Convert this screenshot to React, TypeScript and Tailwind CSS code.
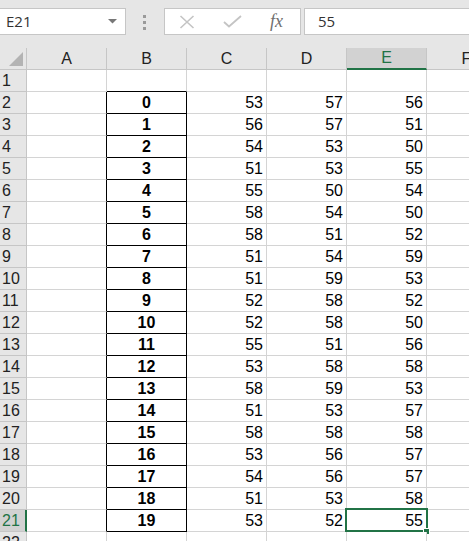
import React from "react";

const C = [53, 56, 54, 51, 55, 58, 58, 51, 51, 52, 52, 55, 53, 58, 51, 58, 53, 54, 51, 53];
const D = [57, 57, 53, 53, 50, 54, 51, 54, 59, 58, 58, 51, 58, 59, 53, 58, 56, 56, 53, 52];
const E = [56, 51, 50, 55, 54, 50, 52, 59, 53, 52, 50, 56, 58, 53, 57, 58, 57, 57, 58, 55];

const font = { fontFamily: '"Liberation Sans", Arial, sans-serif' };

function Toolbar() {
  return (
    <div className="h-[48px] bg-[#e6e6e6] flex items-start shrink-0">
      <div className="mt-[8px] w-[126px] h-[27px] bg-white border border-l-0 border-[#c6c6c6] flex items-center justify-between pl-[6px] pr-[8px] shrink-0">
        <span className="text-[15px] text-[#333]" style={{ fontFamily: '"Open Sans", "Noto Sans", sans-serif' }}>E21</span>
        <svg width="9" height="5" viewBox="0 0 9 5">
          <polygon points="0,0 9,0 4.5,4.5" fill="#777" />
        </svg>
      </div>
      <div className="ml-[17px] mt-[15px] flex flex-col gap-[3px] shrink-0">
        <div className="w-[3px] h-[3px] bg-[#9a9a9a]" />
        <div className="w-[3px] h-[3px] bg-[#9a9a9a]" />
        <div className="w-[3px] h-[3px] bg-[#9a9a9a]" />
      </div>
      <div className="ml-[18px] mt-[8px] w-[137px] h-[27px] bg-white border border-[#c6c6c6] flex items-center shrink-0">
        <svg width="16" height="14" viewBox="0 0 16 14" className="ml-[14px]">
          <path d="M1.5 1 L14.5 13 M14.5 1 L1.5 13" stroke="#c4c4c4" strokeWidth="1.6" fill="none" />
        </svg>
        <svg width="19" height="13" viewBox="0 0 19 13" className="ml-[28px]">
          <path d="M1 7 L6 11.5 L18 1" stroke="#c4c4c4" strokeWidth="1.8" fill="none" />
        </svg>
        <span
          className="ml-[28px] text-[18px] italic text-[#6f6f6f] leading-none -mt-[2px]"
          style={{ fontFamily: '"Liberation Serif", "Times New Roman", serif' }}
        >
          fx
        </span>
      </div>
      <div className="ml-[3px] mt-[8px] flex-1 h-[27px] bg-white border border-r-0 border-[#c6c6c6] flex items-center pl-[13px]">
        <span className="text-[15px] text-[#333]" style={{ fontFamily: '"Open Sans", "Noto Sans", sans-serif' }}>55</span>
      </div>
    </div>
  );
}

function HeaderRow() {
  const cols = ["A", "B", "C", "D", "E", "F"];
  return (
    <div className="flex h-[22px] shrink-0">
      <div className="w-[27px] shrink-0 bg-[#e6e6e6] border-r border-b border-[#c6c6c6] flex items-end justify-end pr-[3px] pb-[3px]">
        <svg width="14" height="14" viewBox="0 0 14 14">
          <polygon points="14,0 14,14 0,14" fill="#b3b3b3" />
        </svg>
      </div>
      {cols.map((c) =>
        c === "E" ? (
          <div
            key={c}
            className="w-[80px] shrink-0 bg-[#d2d2d2] border-r border-[#c6c6c6] border-b-2 border-b-[#217346] flex items-center justify-center text-[16px] text-[#217346]"
          >
            {c}
          </div>
        ) : (
          <div
            key={c}
            className="w-[80px] shrink-0 bg-[#e6e6e6] border-r border-b border-[#c6c6c6] flex items-center justify-center text-[16px] text-[#222]"
          >
            {c}
          </div>
        )
      )}
    </div>
  );
}

function Row({ n }: { n: number }) {
  const i = n - 2;
  const hasData = n >= 2 && n <= 21;
  const selected = n === 21;
  const boxed = n >= 2 && n <= 21;
  return (
    <div className="flex h-[22px] shrink-0">
      {selected ? (
        <div className="w-[27px] shrink-0 bg-[#d2d2d2] border-r-2 border-r-[#217346] border-b border-b-[#c6c6c6] flex items-center pl-[2px] text-[16px] text-[#217346]">
          {n}
        </div>
      ) : (
        <div className="w-[27px] shrink-0 bg-[#e6e6e6] border-r border-b border-[#c6c6c6] flex items-center pl-[2px] text-[16px] text-[#222]">
          {n}
        </div>
      )}
      {/* A */}
      <div
        className={
          boxed
            ? "w-[80px] shrink-0 bg-white border-b border-b-[#d4d4d4] border-r border-r-black"
            : "w-[80px] shrink-0 bg-white border-b border-r border-[#d4d4d4]"
        }
      />
      {/* B */}
      <div
        className={
          boxed || n === 1
            ? "w-[80px] shrink-0 bg-white border-r border-b border-black flex items-center justify-center font-bold text-[16px] text-black"
            : "w-[80px] shrink-0 bg-white border-r border-b border-[#d4d4d4]"
        }
        style={n === 1 ? { borderRightColor: "#d4d4d4" } : undefined}
      >
        {hasData ? i : ""}
      </div>
      {/* C */}
      <div className="w-[80px] shrink-0 bg-white border-r border-b border-[#d4d4d4] flex items-center justify-end pr-[3px] text-[16px] text-black">
        {hasData ? C[i] : ""}
      </div>
      {/* D */}
      <div className="w-[80px] shrink-0 bg-white border-r border-b border-[#d4d4d4] flex items-center justify-end pr-[3px] text-[16px] text-black">
        {hasData ? D[i] : ""}
      </div>
      {/* E */}
      <div className="relative w-[80px] shrink-0 bg-white border-r border-b border-[#d4d4d4] flex items-center justify-end pr-[3px] text-[16px] text-black">
        {hasData ? E[i] : ""}
        {selected && (
          <>
            <div className="absolute -left-[2px] -top-[2px] -right-[2px] -bottom-[1px] border-2 border-[#217346] pointer-events-none" />
            <div className="absolute -right-[4px] -bottom-[4px] w-[7px] h-[7px] bg-[#217346] border border-white" />
          </>
        )}
      </div>
      {/* F */}
      <div className="w-[80px] shrink-0 bg-white border-r border-b border-[#d4d4d4]" />
    </div>
  );
}

export default function App() {
  const rows = Array.from({ length: 22 }, (_, k) => k + 1);
  return (
    <div className="w-[469px] h-[541px] overflow-hidden bg-white flex flex-col" style={font}>
      <Toolbar />
      <HeaderRow />
      {rows.map((n) => (
        <Row key={n} n={n} />
      ))}
    </div>
  );
}
